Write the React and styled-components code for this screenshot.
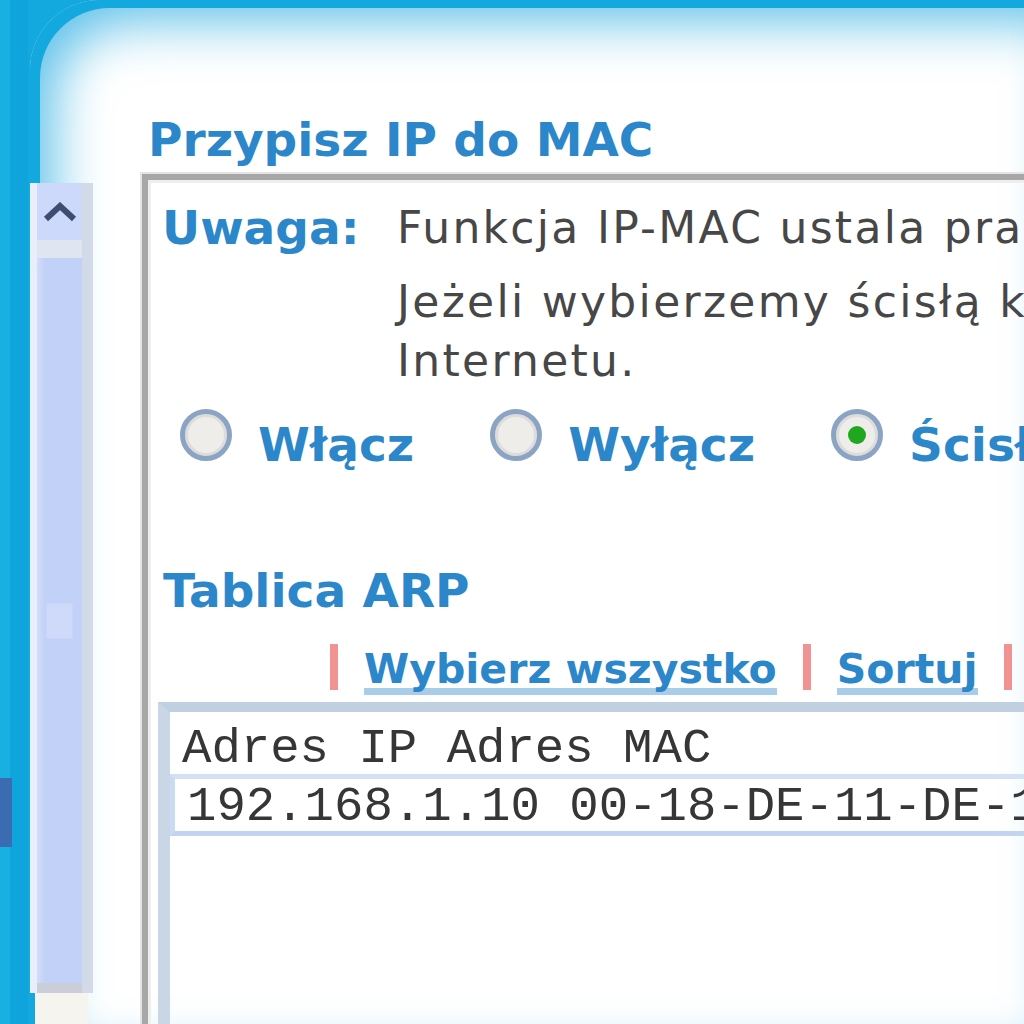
import React from 'react';
import styled, { createGlobalStyle } from 'styled-components';

const Global = createGlobalStyle`
  html, body {
    margin: 0;
    padding: 0;
    background: #ffffff;
  }
`

const Frame = styled.div`
  display: flex;
  width: 1024px;
  height: 1024px;
  overflow: hidden;
  background: #14a9de;
`

const NavStrip = styled.div`
  flex: none;
  width: 30px;
  background: linear-gradient(90deg, #18b0e2 0, #18b0e2 10px, #0fa4db 10px, #0fa4db 28px, #14a9de 28px);
`

const NavMark = styled.div`
  margin-top: 778px;
  width: 12px;
  height: 69px;
  background: #3b6cb2;
`

const Sheet = styled.div`
  flex: 1;
  display: flex;
  min-width: 0;
  background: #ffffff;
  border-top-left-radius: 70px;
  box-shadow: inset 10px 8px 0 0 #14a9de, inset 30px 28px 52px -6px rgba(30, 168, 224, 0.7);
`

const ScrollColumn = styled.div`
  flex: none;
  display: flex;
  flex-direction: column;
  width: 63px;
  margin-top: 183px;
`

const ScrollTrack = styled.div`
  flex: 1;
  display: flex;
  flex-direction: column;
  border-left: 7px solid #e8eefa;
  border-right: 11px solid #d2dae8;
  background: #c4d3f7;
`

const UpButton = styled.div`
  display: flex;
  align-items: center;
  justify-content: center;
  height: 57px;
  background: #cdd9fb;
`

const ScrollGap = styled.div`
  height: 18px;
  background: #dfe6f2;
`

const Thumb = styled.div`
  flex: 1;
  display: flex;
  align-items: center;
  justify-content: center;
  background: linear-gradient(90deg, #d2ddfb 0, #c2d1f7 8px, #c2d1f7 100%);
`

const Grip = styled.div`
  width: 25px;
  height: 34px;
  background: #cfdafa;
  border: 1px solid #c9d5f6;
`

const ScrollEnd = styled.div`
  height: 10px;
  background: #c9ced8;
`

const ScrollFoot = styled.div`
  height: 31px;
  margin: 0 5px;
  background: #f6f4ee;
`

const Main = styled.div`
  flex: 1;
  min-width: 0;
  padding: 112px 0 0 49px;
`

const Title = styled.h1`
  margin: 0 0 0 6px;
  font-family: 'DejaVu Sans', Verdana, sans-serif;
  font-weight: bold;
  font-size: 47px;
  line-height: 56px;
  color: #2b87ca;
  white-space: nowrap;
`

const Panel = styled.div`
  margin-top: 6px;
  width: 1000px;
  height: 900px;
  padding: 18px 0 0 14px;
  border: 6px solid #a7a7a7;
  border-right: none;
  border-bottom: none;
  box-shadow: -2px -2px 0 0 #e4e4e4, inset 3px 3px 0 0 #eeeeee;
`

const Note = styled.div`
  display: flex;
`

const NoteLabel = styled.div`
  flex: none;
  width: 235px;
  font-family: 'DejaVu Sans', Verdana, sans-serif;
  font-weight: bold;
  font-size: 47px;
  line-height: 59px;
  color: #2b87ca;
`

const NoteText = styled.div`
  font-family: 'DejaVu Sans', Verdana, sans-serif;
  font-size: 44px;
  line-height: 59px;
  letter-spacing: 2.3px;
  color: #474747;
  white-space: nowrap;
`

const NoteLine = styled.div`
  margin-top: ${p => p.gap || 0}px;
`

const RadioRow = styled.div`
  display: flex;
  align-items: flex-start;
  gap: 76px;
  margin: 25px 0 0 18px;
  white-space: nowrap;
`

const RadioOption = styled.label`
  display: flex;
  align-items: flex-start;
  gap: 26px;
`

const RadioDot = styled.span`
  position: relative;
  flex: none;
  width: 42px;
  height: 42px;
  margin-top: -6px;
  border-radius: 50%;
  border: 5px solid #8ba4c4;
  background: #efedea;
  box-shadow: inset 0 0 0 3px #dcdcdc;

  &::after {
    content: '';
    display: ${p => (p.checked ? 'block' : 'none')};
    position: absolute;
    left: 12px;
    top: 12px;
    width: 18px;
    height: 18px;
    border-radius: 50%;
    background: #1fa81f;
  }
`

const RadioLabel = styled.span`
  font-family: 'DejaVu Sans', Verdana, sans-serif;
  font-weight: bold;
  font-size: 47px;
  line-height: 59px;
  color: #2b87ca;
`

const Section = styled.h2`
  margin: 87px 0 0 1px;
  font-family: 'DejaVu Sans', Verdana, sans-serif;
  font-weight: bold;
  font-size: 47px;
  line-height: 59px;
  color: #2b87ca;
`

const LinkRow = styled.div`
  display: flex;
  align-items: flex-start;
  gap: 26px;
  margin: 24px 0 0 168px;
  white-space: nowrap;
`

const Bar = styled.span`
  flex: none;
  width: 8px;
  height: 46px;
  background: #f29393;
`

const Action = styled.a`
  padding-top: 6px;
  font-family: 'DejaVu Sans', Verdana, sans-serif;
  font-weight: bold;
  font-size: 41px;
  line-height: 38px;
  color: #2b87ca;
  text-decoration: none;
  border-bottom: 7px solid #a9cde8;
`

const ListBox = styled.div`
  margin: 7px 0 0 -4px;
  height: 400px;
  border-left: 12px solid #c8d6e6;
  border-top: 10px solid #c0d0e0;
  font-family: 'Liberation Mono', 'Courier New', monospace;
  font-size: 49px;
  color: #363636;
  white-space: nowrap;
`

const ListHead = styled.div`
  padding: 12px 0 0 12px;
  height: 50px;
  line-height: 50px;
`

const ListRow = styled.div`
  padding: 4px 0 0 12px;
  line-height: 48px;
  border-top: 5px solid #d3e0f6;
  border-bottom: 5px solid #c3d4f0;
  border-left: 5px solid #cbdaf3;
`

const Chevron = () => (
  <svg width="34" height="20" viewBox="0 0 34 20">
    <path d="M3 17 L17 4 L31 17" fill="none" stroke="#3e4c72" strokeWidth="6" />
  </svg>
)

const radios = [
  { label: 'Włącz', checked: false },
  { label: 'Wyłącz', checked: false },
  { label: 'Ścisła', checked: true },
]

export default function App() {
  return (
    <>
      <Global />
      <Frame>
        <NavStrip>
          <NavMark />
        </NavStrip>
        <Sheet>
          <ScrollColumn>
            <ScrollTrack>
              <UpButton><Chevron /></UpButton>
              <ScrollGap />
              <Thumb><Grip /></Thumb>
              <ScrollEnd />
            </ScrollTrack>
            <ScrollFoot />
          </ScrollColumn>
          <Main>
            <Title>Przypisz IP do MAC</Title>
            <Panel>
              <Note>
                <NoteLabel>Uwaga:</NoteLabel>
                <NoteText>
                  <NoteLine>Funkcja IP-MAC ustala prawa dostępu.</NoteLine>
                  <NoteLine gap={15}>Jeżeli wybierzemy ścisłą kontrolę,</NoteLine>
                  <NoteLine>Internetu.</NoteLine>
                </NoteText>
              </Note>
              <RadioRow>
                {radios.map(r => (
                  <RadioOption key={r.label}>
                    <RadioDot checked={r.checked} />
                    <RadioLabel>{r.label}</RadioLabel>
                  </RadioOption>
                ))}
              </RadioRow>
              <Section>Tablica ARP</Section>
              <LinkRow>
                <Bar />
                <Action>Wybierz wszystko</Action>
                <Bar />
                <Action>Sortuj</Action>
                <Bar />
              </LinkRow>
              <ListBox>
                <ListHead>Adres IP Adres MAC</ListHead>
                <ListRow>192.168.1.10 00-18-DE-11-DE-1F</ListRow>
              </ListBox>
            </Panel>
          </Main>
        </Sheet>
      </Frame>
    </>
  );
}
